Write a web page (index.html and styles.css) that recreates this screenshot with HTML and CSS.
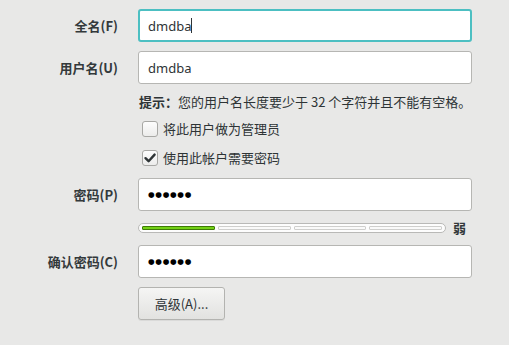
FILE: index.html
```html
<!DOCTYPE html>
<html lang="zh">
<head>
<meta charset="utf-8">
<link rel="stylesheet" href="styles.css">
</head>
<body>
<div class="form">
  <div class="row r-full">
    <label class="lbl">全名(F)</label>
    <div class="field focus">dmdba<span class="caret"></span></div>
  </div>
  <div class="row r-user">
    <label class="lbl">用户名(U)</label>
    <div class="field">dmdba</div>
  </div>
  <div class="row r-hint">
    <span></span>
    <div class="hint"><b>提示：</b>您的用户名长度要少于 32 个字符并且不能有空格。</div>
  </div>
  <div class="row r-chk1">
    <span></span>
    <div class="check"><span class="box"></span>将此用户做为管理员</div>
  </div>
  <div class="row r-chk2">
    <span></span>
    <div class="check"><span class="box on"><svg viewBox="0 0 16 16" width="16" height="16"><path d="M3.5 8.2 L6.6 11.2 L12.6 4.6" fill="none" stroke="#2e3436" stroke-width="2.4" stroke-linecap="round" stroke-linejoin="round"/></svg></span>使用此帐户需要密码</div>
  </div>
  <div class="row r-pass">
    <label class="lbl">密码(P)</label>
    <div class="field dots">●●●●●●</div>
  </div>
  <div class="row r-bar">
    <span></span>
    <div class="strength">
      <div class="bar">
        <span class="seg fill"></span>
        <span class="seg"></span>
        <span class="seg"></span>
        <span class="seg"></span>
      </div>
      <span class="weak">弱</span>
    </div>
  </div>
  <div class="row r-conf">
    <label class="lbl">确认密码(C)</label>
    <div class="field dots">●●●●●●</div>
  </div>
  <div class="row r-btn">
    <span></span>
    <div class="btn-wrap"><button class="btn">高级(A)...</button></div>
  </div>
</div>
</body>
</html>
```

FILE: styles.css
```css
html, body {
  margin: 0;
  padding: 0;
  background: #e8e8e7;
  width: 509px;
  height: 345px;
  overflow: hidden;
}
body {
  font-family: "Noto Sans", "Noto Sans CJK SC", sans-serif;
  font-size: 13px;
  color: #2e3436;
}
.form {
  display: flex;
  flex-direction: column;
  padding-top: 9px;
}
.row {
  display: grid;
  grid-template-columns: 118px 334px;
  column-gap: 20px;
  align-items: center;
}
.lbl {
  text-align: right;
  font-weight: bold;
  color: #33393b;
  font-family: "Noto Sans CJK SC", "Noto Sans", sans-serif;
}
.field {
  box-sizing: border-box;
  height: 33px;
  border: 1px solid #b6b6b3;
  border-radius: 3px;
  background: #fff;
  padding-left: 9px;
  display: flex;
  align-items: center;
  color: #2e3436;
}
.field.focus {
  border: 2px solid #4cbfc2;
  padding-left: 8px;
}
.caret {
  display: inline-block;
  width: 1px;
  height: 15px;
  background: #2e3436;
}
.dots {
  font-family: "DejaVu Sans", sans-serif;
  font-size: 7.6px;
  letter-spacing: 0.7px;
  color: #000;
}
.r-user { margin-top: 9px; }
.r-hint { margin-top: 8px; height: 18px; }
.hint {
  font-family: "Noto Sans CJK SC", sans-serif;
  padding-left: 1px;
  white-space: nowrap;
  color: #2e3436;
}
.hint b { font-weight: bold; }
.r-chk1 { margin-top: 9px; height: 18px; }
.r-chk2 { margin-top: 11px; height: 18px; }
.check {
  display: flex;
  align-items: center;
  padding-left: 4px;
  font-family: "Noto Sans CJK SC", sans-serif;
  white-space: nowrap;
}
.box {
  box-sizing: border-box;
  width: 16px;
  height: 16px;
  border: 1px solid #a8a8a5;
  border-radius: 3px;
  background: linear-gradient(#fdfdfd, #ececeb);
  margin-right: 5px;
  display: flex;
  align-items: center;
  justify-content: center;
}
.box svg { display: block; margin: -1px; }
.r-pass { margin-top: 12px; }
.r-bar { margin-top: 12px; height: 10px; }
.strength {
  display: flex;
  align-items: center;
  width: 340px;
  height: 10px;
}
.bar {
  box-sizing: border-box;
  width: 308px;
  height: 10px;
  border: 1px solid #b9b9b7;
  border-radius: 5px;
  background: #fdfdfd;
  display: flex;
  align-items: center;
  gap: 3px;
  padding: 0 3px;
}
.seg {
  flex: 1;
  box-sizing: border-box;
  height: 4px;
  border: 1px solid #cfcfcd;
  border-radius: 1px;
  background: #fafafa;
}
.seg.fill {
  background: #73d216;
  border-color: #3f7a06;
}
.weak {
  margin-left: 7px;
  font-weight: bold;
  line-height: 10px;
  font-family: "Noto Sans CJK SC", sans-serif;
  color: #33393b;
}
.r-conf { margin-top: 12px; }
.r-btn { margin-top: 9px; }
.btn-wrap { display: flex; }
.btn {
  box-sizing: border-box;
  width: 87px;
  height: 33px;
  border: 1px solid #b3b3b0;
  border-radius: 3px;
  background: linear-gradient(#f5f5f4, #e2e2e0);
  font-family: "Noto Sans CJK SC", "Noto Sans", sans-serif;
  font-size: 13px;
  color: #2e3436;
  padding: 0;
  box-shadow: 0 1px 0 rgba(0,0,0,0.06);
}
```
